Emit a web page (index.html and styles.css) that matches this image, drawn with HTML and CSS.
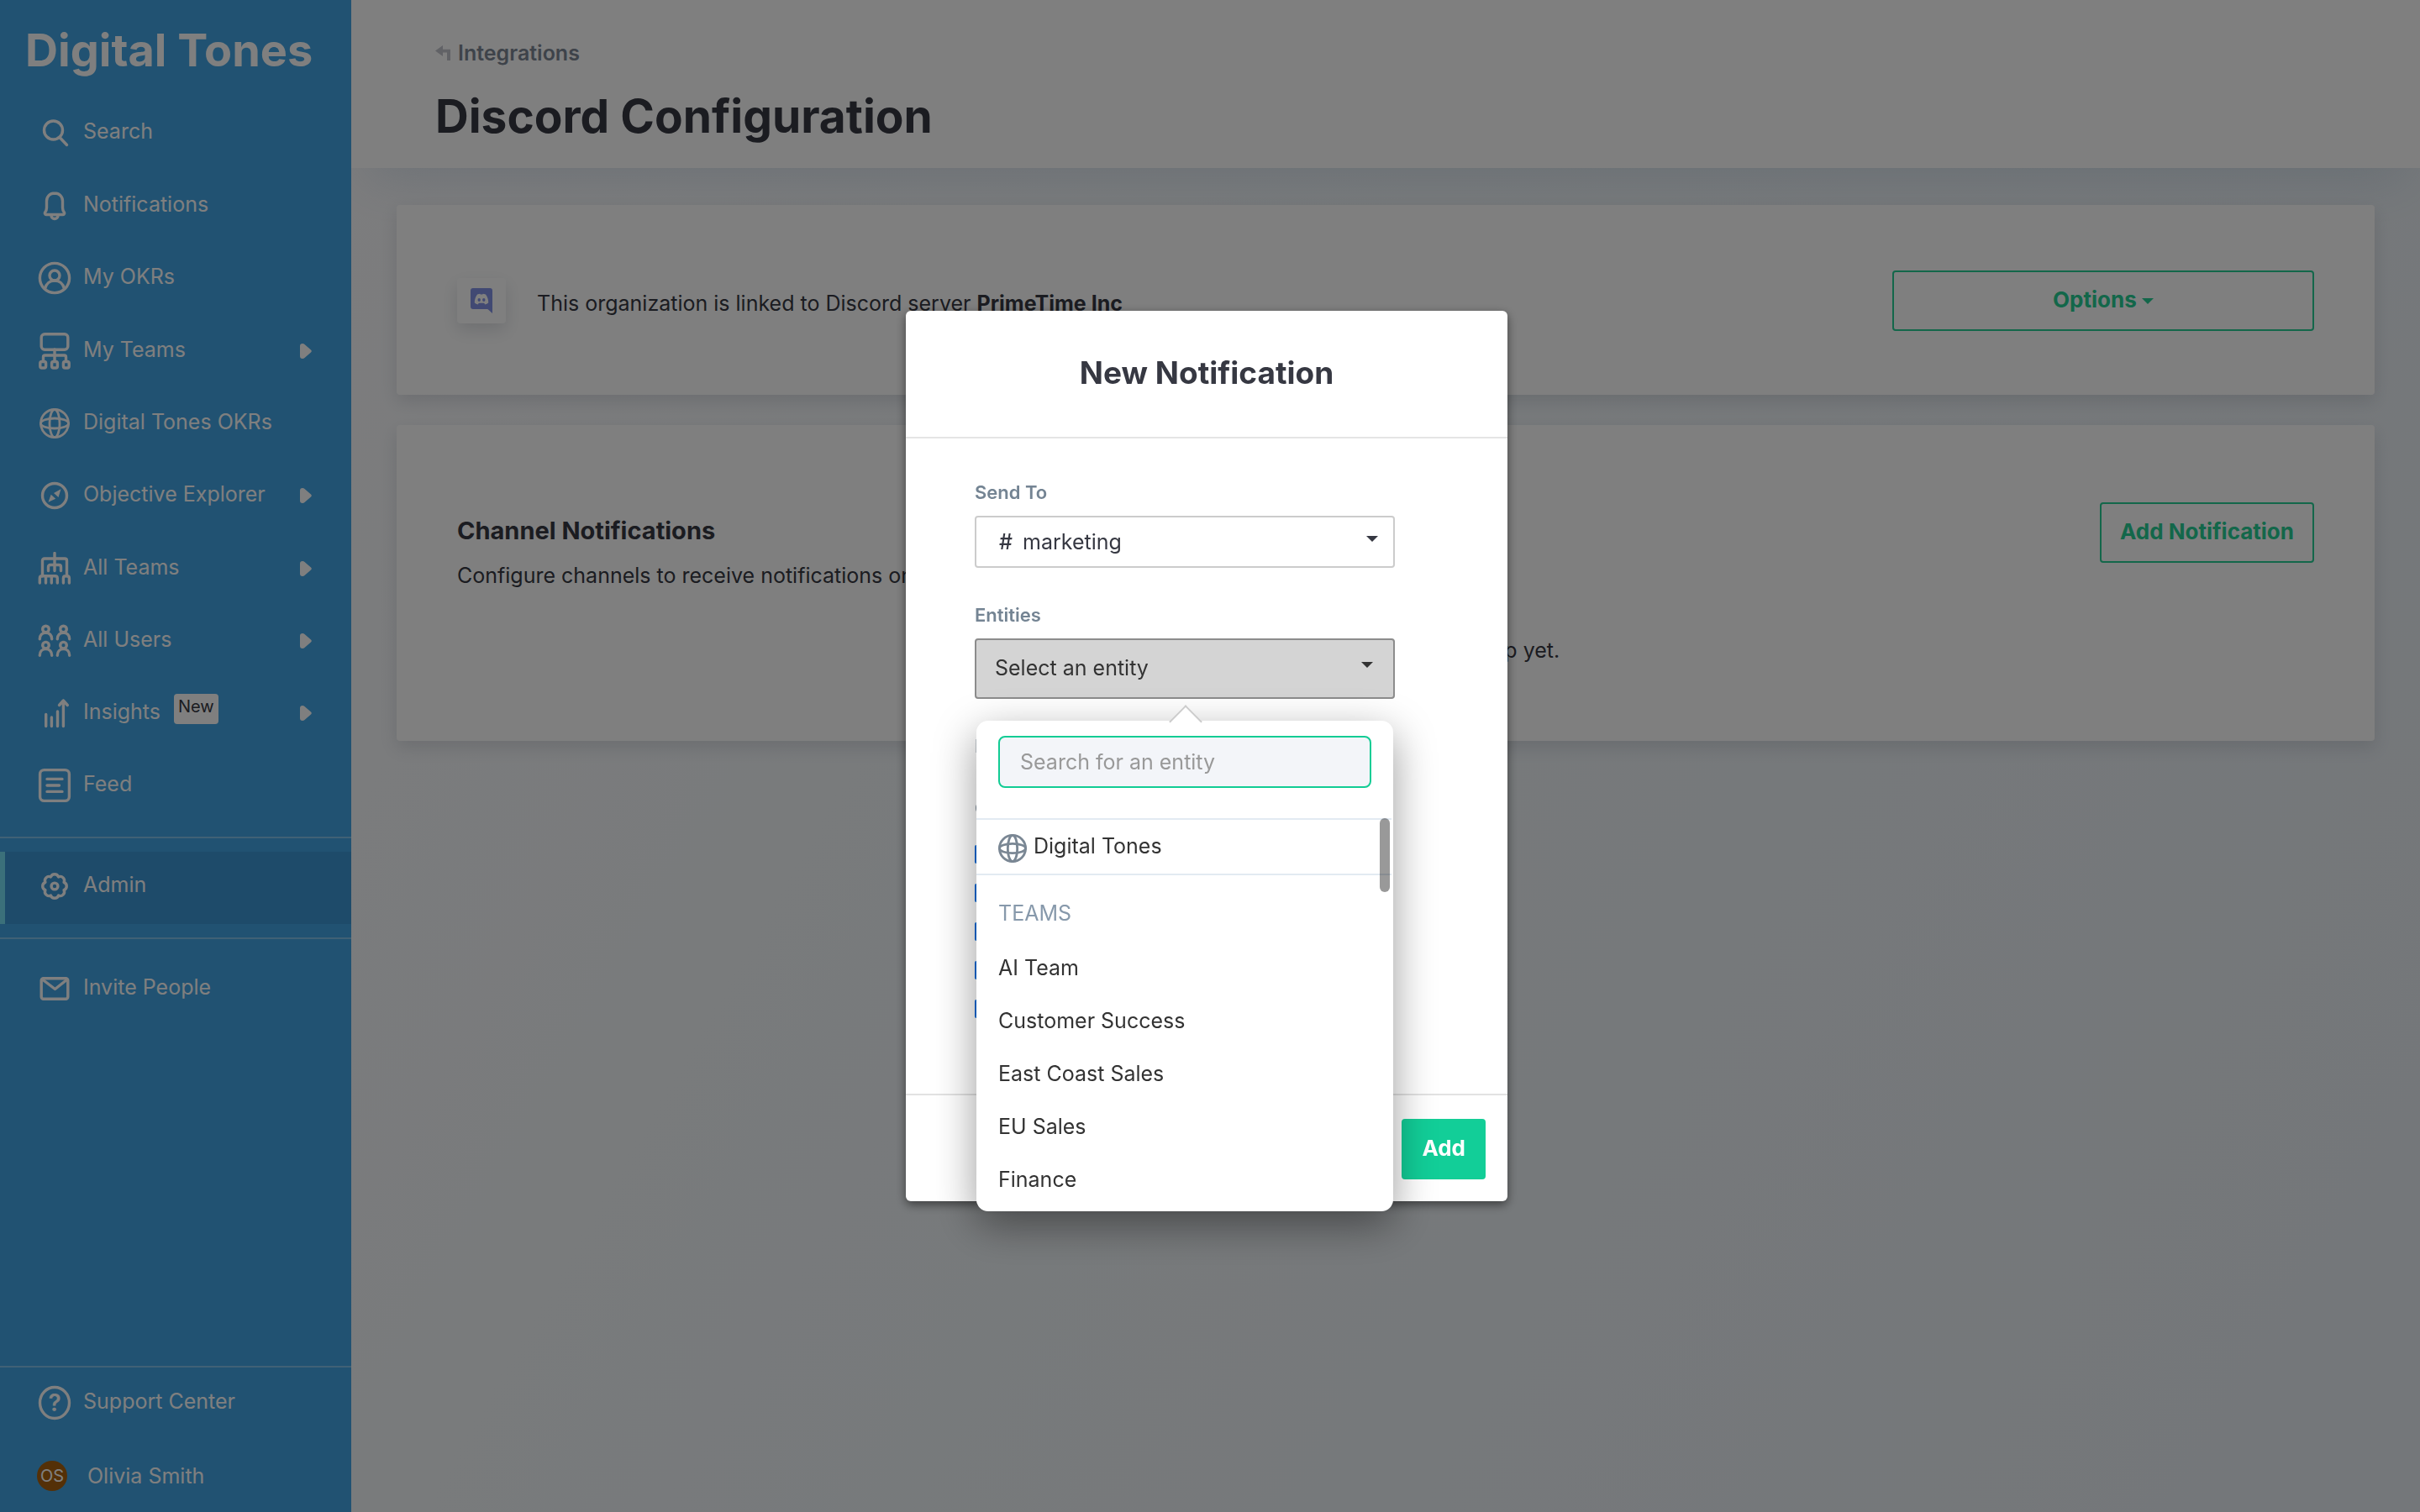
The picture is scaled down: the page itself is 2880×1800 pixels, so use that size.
FILE: index.html
```html
<!DOCTYPE html>
<html lang="en">
<head>
<meta charset="utf-8">
<title>Discord Configuration</title>
<link rel="stylesheet" href="styles.css">
</head>
<body>
<div class="app">
  <aside class="sidebar">
    <div class="brand">Digital Tones</div>
    <nav class="nav">
      <a class="nav-item tall" href="#">
        <svg class="icon" viewBox="0 0 40 40"><circle cx="18.5" cy="17" r="11"/><path d="M26 25.5l8.5 9"/></svg>
        <span>Search</span>
      </a>
      <a class="nav-item" href="#">
        <svg class="icon" viewBox="0 0 40 40"><path d="M20 5c-5.6 0-9.5 4-9.5 9.3v8c0 2-.8 4-1.8 5.4-.8 1.2 0 2.8 1.2 2.8h20.2c1.2 0 2-1.6 1.2-2.8-1-1.4-1.8-3.4-1.8-5.4v-8C29.500 9 25.600 5 20 5zM16 31.500a4 4 0 0 0 8 0"/></svg>
        <span>Notifications</span>
      </a>
      <a class="nav-item" href="#">
        <svg class="icon" viewBox="0 0 40 40"><circle cx="20" cy="20" r="17.600"/><circle cx="20" cy="17" r="6"/><path d="M8.500 32.500c1.500-6 6-9.500 11.500-9.500s10 3.500 11.500 9.500"/></svg>
        <span>My OKRs</span>
      </a>
      <a class="nav-item tall" href="#">
        <svg class="icon icon-46" viewBox="0 0 40 46"><rect x="4.200" y="2.800" width="31.600" height="18.400" rx="4"/><path d="M20 21v14M6.500 35v-5q0-2 2-2h23q2 0 2 2v5"/><rect x="2.800" y="35.500" width="6.800" height="7.500" rx="2"/><rect x="16.600" y="35.500" width="6.800" height="7.500" rx="2"/><rect x="30.400" y="35.500" width="6.800" height="7.500" rx="2"/></svg>
        <span>My Teams</span>
        <svg class="arrow" viewBox="0 0 14 18"><path d="M0 3Q0 0 3 0 4.500 0 5.500 1L13 7.500Q14.600 9 13 10.500L5.500 17Q4.500 18 3 18 0 18 0 15z"/></svg>
      </a>
      <a class="nav-item short" href="#">
        <svg class="icon icon-globe" viewBox="0 0 40 40"><circle cx="20" cy="20" r="16.500"/><ellipse cx="20" cy="20" rx="6" ry="16.500"/><ellipse cx="20" cy="20" rx="16.500" ry="6"/></svg>
        <span>Digital Tones OKRs</span>
      </a>
      <a class="nav-item tall" href="#">
        <svg class="icon" viewBox="0 0 40 40"><circle cx="20" cy="20" r="14.500"/><path class="solid" d="M27.500 12.200L19 17l5.500 5zM12.500 27.800l3.200-9 5.500 5z"/></svg>
        <span>Objective Explorer</span>
        <svg class="arrow" viewBox="0 0 14 18"><path d="M0 3Q0 0 3 0 4.500 0 5.500 1L13 7.500Q14.600 9 13 10.500L5.500 17Q4.500 18 3 18 0 18 0 15z"/></svg>
      </a>
      <a class="nav-item" href="#">
        <svg class="icon" viewBox="0 0 40 40"><path d="M20 1.500v21M5.500 29V10.500q0-2.500 2.500-2.500h24q2.500 0 2.500 2.500V29M12.500 22.500V18q0-2.500 2.500-2.500h10q2.500 0 2.500 2.500v4.500M2.300 37v-5.500q0-2.700 2.700-2.700h15.600q2.700 0 2.700 2.700V37M9.500 29v8M16.300 29v8M30.400 37v-5.500q0-2.700 2.700-2.700h1.600q2.700 0 2.700 2.700V37"/></svg>
        <span>All Teams</span>
        <svg class="arrow" viewBox="0 0 14 18"><path d="M0 3Q0 0 3 0 4.500 0 5.500 1L13 7.500Q14.600 9 13 10.500L5.500 17Q4.500 18 3 18 0 18 0 15z"/></svg>
      </a>
      <a class="nav-item" href="#">
        <svg class="icon" viewBox="0 0 40 40"><circle cx="9.500" cy="6" r="3.800"/><circle cx="30.500" cy="6" r="3.800"/><circle cx="9.500" cy="25.200" r="3.800"/><circle cx="30.500" cy="25.200" r="3.800"/><path d="M2.300 17.800c0-4.800 3-7.600 7.200-7.600s7.200 2.800 7.200 7.600M23.300 17.800c0-4.800 3-7.600 7.200-7.600s7.200 2.800 7.200 7.600M2.300 37.200c0-4.800 3-7.600 7.200-7.600s7.200 2.800 7.200 7.600M23.300 37.200c0-4.800 3-7.600 7.200-7.600s7.200 2.800 7.200 7.600"/></svg>
        <span>All Users</span>
        <svg class="arrow" viewBox="0 0 14 18"><path d="M0 3Q0 0 3 0 4.500 0 5.500 1L13 7.500Q14.600 9 13 10.500L5.500 17Q4.500 18 3 18 0 18 0 15z"/></svg>
      </a>
      <a class="nav-item" href="#">
        <svg class="icon" viewBox="0 0 40 40"><path d="M9.700 21.500V35.500M16.400 25v10.500M23.500 18v17.500M30.400 5v30.500M25.500 10.500l4.900-5.500 4.900 5.500"/></svg>
        <span>Insights</span>
        <span class="badge">New</span>
        <svg class="arrow" viewBox="0 0 14 18"><path d="M0 3Q0 0 3 0 4.500 0 5.500 1L13 7.500Q14.600 9 13 10.500L5.500 17Q4.500 18 3 18 0 18 0 15z"/></svg>
      </a>
      <a class="nav-item" href="#">
        <svg class="icon icon-42" viewBox="0 0 40 42"><rect x="2.600" y="2.600" width="34.800" height="36.800" rx="5"/><path d="M11 13.400h18M11 21h14.500M11 28.400h18"/></svg>
        <span>Feed</span>
      </a>
    </nav>
    <div class="nav-section">
      <a class="nav-item active" href="#">
        <svg class="icon" viewBox="0 0 40 40"><path d="M31.090 24.590A4.900 4.900 0 0 1 24.590 31.090 4.900 4.900 0 0 1 15.410 31.090 4.900 4.900 0 0 1 8.910 24.590 4.900 4.900 0 0 1 8.910 15.410 4.900 4.900 0 0 1 15.410 8.910 4.900 4.900 0 0 1 24.590 8.910 4.900 4.900 0 0 1 31.090 15.410 4.900 4.900 0 0 1 31.090 24.590z"/><circle cx="20" cy="20" r="3.900"/></svg>
        <span>Admin</span>
      </a>
    </div>
    <nav class="nav invite">
      <a class="nav-item" href="#">
        <svg class="icon" viewBox="0 0 40 40"><rect x="4.200" y="7.700" width="31.600" height="24.600" rx="2.500"/><path d="M5.500 9L20.500 20.500 35 9"/></svg>
        <span>Invite People</span>
      </a>
    </nav>
    <nav class="nav-bottom">
      <a class="nav-item tall" href="#">
        <svg class="icon icon-42" viewBox="0 0 40 42"><ellipse cx="20" cy="21" rx="17.500" ry="18.500"/><text class="glyph" x="20" y="31" text-anchor="middle">?</text></svg>
        <span>Support Center</span>
      </a>
      <a class="nav-item account" href="#">
        <span class="avatar">OS</span>
        <span>Olivia Smith</span>
      </a>
    </nav>
  </aside>

  <main class="main">
    <header class="page-head">
      <a class="back" href="#">
        <svg viewBox="0 0 18 18" class="back-icon"><path d="M0 6.500L9 0v4.800h9V18h-4V8.500H9V13z"/></svg>
        <span>Integrations</span>
      </a>
      <h1>Discord Configuration</h1>
    </header>
    <div class="cards">
      <section class="card link-card">
        <span class="app-tile">
          <svg viewBox="0 0 26 30" class="discord"><path class="discord-body" d="M3 0h20q3 0 3 3v27l-5-4.500-.8-.5H3q-3 0-3-3V3q0-3 3-3z"/><path class="discord-face" d="M8 7.600q2.200-.9 3.300-.9l.5.900h2.400l.5-.9q1.100 0 3.300.9 3.400 4.600 3.200 10-1.800 1.600-4 1.900l-1-1.700h-6.400l-1 1.700q-2.200-.3-4-1.900-.2-5.400 3.200-10z"/><ellipse class="discord-body" cx="10.200" cy="14" rx="1.700" ry="1.900"/><ellipse class="discord-body" cx="15.800" cy="14" rx="1.700" ry="1.900"/></svg>
        </span>
        <p class="linked">This organization is linked to Discord server <strong>PrimeTime Inc</strong></p>
        <button class="btn outline wide" type="button">Options <svg class="caret" viewBox="0 0 14 7"><path d="M0 0h14L7 7z"/></svg></button>
      </section>
      <section class="card channels">
        <div class="channels-head">
          <div class="channels-text">
            <h2>Channel Notifications</h2>
            <p>Configure channels to receive notifications on Discord.</p>
          </div>
          <button class="btn outline" type="button">Add Notification</button>
        </div>
        <p class="empty">No Discord notifications set up yet.</p>
      </section>
    </div>
  </main>
</div>

<div class="backdrop">
  <form class="modal" role="dialog" aria-labelledby="modal-title">
    <header class="modal-head"><h2 id="modal-title">New Notification</h2></header>
    <div class="modal-body">
      <div class="field">
        <label for="channel">Send To</label>
        <div class="select-box">
          <span class="hash">#</span>
          <select id="channel"><option>marketing</option></select>
          <svg class="caret" viewBox="0 0 14 7"><path d="M0 0h14L7 7z"/></svg>
        </div>
      </div>
      <div class="field">
        <label for="entity">Entities</label>
        <button class="entity-toggle" id="entity" type="button"><span>Select an entity</span><svg class="caret" viewBox="0 0 14 7"><path d="M0 0h14L7 7z"/></svg></button>
        <div class="popover">
          <div class="popover-search"><input type="text" aria-label="Search for an entity" placeholder="Search for an entity"></div>
          <div class="popover-list">
            <a class="org" href="#">
              <svg class="icon icon-org" viewBox="2 2 36 36"><circle cx="20" cy="20" r="16.500"/><ellipse cx="20" cy="20" rx="6" ry="16.500"/><ellipse cx="20" cy="20" rx="16.500" ry="6"/></svg>
              <span>Digital Tones</span>
            </a>
            <div class="group">TEAMS</div>
            <a class="option" href="#">AI Team</a>
            <a class="option" href="#">Customer Success</a>
            <a class="option" href="#">East Coast Sales</a>
            <a class="option" href="#">EU Sales</a>
            <a class="option" href="#">Finance</a>
            <span class="thumb"></span>
          </div>
        </div>
      </div>
      <div class="field">
        <div class="label">Notify On</div>
      </div>
      <fieldset class="events">
        <legend class="label">OKR events</legend>
        <input type="checkbox" aria-label="Created" checked>
        <input type="checkbox" aria-label="Updated" checked>
        <input type="checkbox" aria-label="Closed" checked>
        <input type="checkbox" aria-label="Check-ins" checked>
        <input type="checkbox" aria-label="Comments" checked>
      </fieldset>
    </div>
    <footer class="modal-foot"><button class="btn primary" type="button">Add</button></footer>
  </form>
</div>
</body>
</html>
```
FILE: styles.css
```css
* { box-sizing: border-box; }

body {
  margin: 0;
  font-family: Inter, "Liberation Sans", sans-serif;
  font-size: 25px;
  line-height: 32px;
  color: #363842;
}

h1, h2, p { margin: 0; }
a { color: inherit; text-decoration: none; }
button, input, select { font: inherit; color: inherit; margin: 0; }

.app {
  display: flex;
  min-height: 100vh;
}

/* Sidebar */
.sidebar {
  position: relative;
  z-index: 1;
  display: flex;
  flex-direction: column;
  flex: none;
  width: 418px;
  background: #42a5e4;
  color: #fff;
}

.brand {
  padding: 28px 28px 24px 30px;
  font-size: 54px;
  line-height: 64px;
  font-weight: 700;
}

.nav-item {
  display: flex;
  align-items: center;
  gap: 14px;
  height: 86px;
  padding: 0 47px 8px 45px;
}
.nav-item.tall { height: 88px; }
.nav-item.short { height: 84px; }

.icon {
  flex: none;
  width: 40px;
  height: 40px;
  margin-top: 4px;
  fill: none;
  stroke: currentColor;
  stroke-width: 3.4;
  stroke-linecap: round;
  stroke-linejoin: round;
}
.icon-globe { stroke-width: 2.8; }
.icon-42 { height: 42px; }
.icon-46 { height: 46px; }
.icon .solid { fill: currentColor; stroke: none; }
.icon .glyph {
  fill: currentColor;
  stroke: none;
  font-size: 28px;
  font-weight: 600;
}

.arrow {
  flex: none;
  width: 14px;
  height: 18px;
  margin: 4px 0 0 auto;
  fill: currentColor;
}

.badge {
  height: 36px;
  margin: 0 0 6px 2px;
  padding: 0 5px;
  border-radius: 4px;
  background: #fff;
  color: #363842;
  font-size: 20px;
  line-height: 30px;
}

.nav-section {
  margin-top: 16px;
  padding: 16px 0;
  border-top: 2px solid rgba(255, 255, 255, .33);
  border-bottom: 2px solid rgba(255, 255, 255, .33);
}
.nav-item.active {
  background: #3c97d5;
  box-shadow: inset 6px 0 #76e0f4;
}
.invite { padding-top: 18px; }

.nav-bottom {
  margin-top: auto;
  border-top: 2px solid rgba(255, 255, 255, .33);
}
.nav-item.account {
  height: 84px;
  padding: 0 44px 2px;
  gap: 24px;
}
.avatar {
  width: 36px;
  height: 36px;
  border-radius: 50%;
  background: #a8600f;
  font-size: 20px;
  line-height: 36px;
  text-align: center;
}

/* Page */
.main {
  flex: 1;
  min-width: 0;
  background: linear-gradient(120deg, #fafafc, #f0f5f8 40%, #e8eef4);
}

.page-head {
  padding: 48px 100px 30px;
  background: #fff;
  box-shadow: 0 30px 60px -20px rgba(70, 120, 170, .16);
}
.back {
  display: flex;
  align-items: center;
  gap: 9px;
  line-height: 30px;
  font-weight: 600;
  color: #7c8794;
}
.back-icon {
  width: 18px;
  height: 18px;
  fill: #c3c4cc;
}
h1 {
  margin-top: 28px;
  font-size: 55px;
  line-height: 64px;
  font-weight: 700;
}

.cards {
  display: flex;
  flex-direction: column;
  gap: 36px;
  padding: 44px 54px;
}
.card {
  border-radius: 4px;
  background: #fff;
  box-shadow: 0 8px 20px rgba(50, 60, 80, .14);
}

.link-card {
  display: flex;
  align-items: center;
  padding: 78px 72px 76px;
}
.app-tile {
  display: grid;
  place-items: center;
  width: 58px;
  height: 54px;
  border-radius: 4px;
  box-shadow: 0 8px 20px rgba(50, 60, 80, .16);
}
.discord { width: 26px; height: 30px; }
.discord-body { fill: #8292e6; }
.discord-face { fill: #fff; }
.linked {
  flex: 1;
  padding: 6px 0 0 37px;
}

.btn {
  height: 72px;
  padding: 0 22px 2px;
  border: 2px solid #14ce96;
  border-radius: 4px;
  font-size: 26px;
  line-height: 32px;
  font-weight: 700;
}
.btn.outline { background: transparent; color: #26ce94; border-color: #26ce94; }
.btn.primary { background: #12ce98; color: #fff; }
.btn.wide { width: 502px; }
.caret {
  width: 14px;
  height: 7px;
  fill: currentColor;
}
.btn .caret { margin-bottom: 4px; }

.channels { padding: 92px 72px; }
.channels-head {
  display: flex;
  align-items: flex-start;
  justify-content: space-between;
}
.channels-text { padding-top: 16px; }
.channels-text h2 {
  margin-bottom: 19px;
  font-size: 29px;
  line-height: 36px;
  font-weight: 700;
}
.empty {
  margin-top: 57px;
  text-align: center;
}

/* Dialog */
.backdrop {
  position: fixed;
  z-index: 2;
  inset: 0;
  display: flex;
  align-items: center;
  justify-content: center;
  padding-right: 8px;
  background: rgba(0, 0, 0, .5);
}
.modal {
  width: 716px;
  border-radius: 6px;
  background: #fff;
  box-shadow: 0 4px 12px rgba(0, 0, 0, .5);
}
.modal-head {
  padding: 50px 24px 52px;
  border-bottom: 2px solid #e5e5e5;
}
.modal-head h2 {
  font-size: 37px;
  line-height: 48px;
  font-weight: 700;
  text-align: center;
}
.modal-body { padding: 50px 134px 90px 82px; }

.field { position: relative; }
.field + .field { margin-top: 42px; }
.field > label, .label {
  display: block;
  font-size: 22px;
  line-height: 28px;
  font-weight: 600;
  color: #748493;
}
.field > label { margin-bottom: 14px; }

.select-box {
  display: flex;
  align-items: center;
  height: 62px;
  padding: 0 18px 0 27px;
  border: 2px solid #ccc;
  border-radius: 4px;
}
.hash { width: 28px; font-weight: 500; }
.select-box select {
  flex: 1;
  height: 32px;
  padding: 0;
  border: 0;
  background: transparent;
  appearance: none;
  line-height: 32px;
}
.select-box .caret { margin-bottom: 8px; }

.entity-toggle {
  display: flex;
  align-items: center;
  justify-content: space-between;
  width: 100%;
  height: 72px;
  padding: 0 24px 2px 22px;
  border: 2px solid #8c8c8c;
  border-radius: 4px;
  background: #d4d4d4;
  color: #333;
}
.entity-toggle .caret { margin-bottom: 8px; }

.popover {
  position: absolute;
  z-index: 1;
  top: 100%;
  left: 2px;
  right: 2px;
  margin-top: 26px;
  border-radius: 14px;
  background: #fff;
  color: #333;
  box-shadow: 0 16px 50px rgba(0, 0, 0, .4);
}
.popover::before {
  content: "";
  position: absolute;
  z-index: -1;
  top: -13px;
  left: 50%;
  width: 26px;
  height: 26px;
  margin-left: -13px;
  border-top: 2px solid #ccc;
  border-left: 2px solid #ccc;
  background: #fff;
  transform: rotate(45deg);
}
.popover-search { padding: 18px 26px 36px; }
.popover-search input {
  display: block;
  width: 100%;
  height: 62px;
  padding: 0 24px;
  border: 2px solid #12cc94;
  border-radius: 8px;
  background: #f3f5f9;
  outline: none;
}
.popover-search input::placeholder { color: #999; opacity: 1; }

.popover-list {
  position: relative;
  padding: 0 2px 6px 0;
}
.org {
  display: flex;
  align-items: center;
  gap: 8px;
  height: 68px;
  padding: 0 26px 2px;
  border-top: 2px solid #e2eaf2;
  border-bottom: 2px solid #e2eaf2;
}
.icon-org {
  width: 34px;
  height: 34px;
  margin-top: 6px;
  color: #7a8794;
  stroke-width: 3;
}
.group {
  padding: 29px 26px 18px;
  color: #8799ab;
}
.option {
  display: block;
  padding: 0 26px;
  line-height: 63px;
}
.thumb {
  position: absolute;
  top: 0;
  right: 4px;
  width: 12px;
  height: 88px;
  border-radius: 6px;
  background: rgba(0, 0, 0, .4);
}

.events {
  display: flex;
  flex-direction: column;
  gap: 24px;
  margin: 46px 0 0;
  padding: 0;
  border: 0;
}
.events .label { margin-bottom: 30px; padding: 0; }
.events input {
  width: 22px;
  height: 22px;
  accent-color: #0a6cdb;
}

.modal-foot {
  display: flex;
  justify-content: flex-end;
  padding: 28px 26px 26px;
  border-top: 2px solid #e2e2e2;
}
```
